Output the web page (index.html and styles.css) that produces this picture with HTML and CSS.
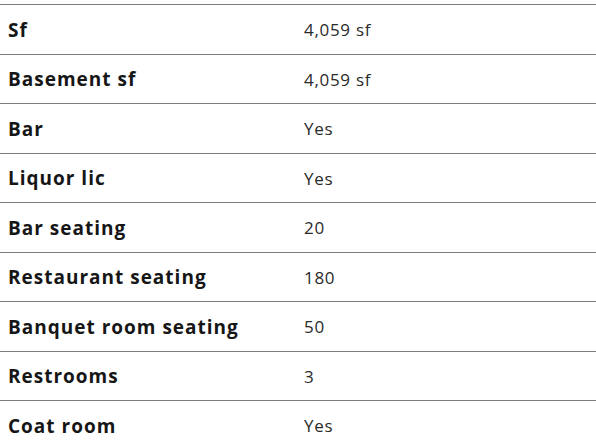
FILE: index.html
```html
<!DOCTYPE html>
<html>
<head>
<meta charset="utf-8">
<link rel="stylesheet" href="styles.css">
</head>
<body>
<div class="specs">
  <div class="row"><div class="label">Sf</div><div class="value">4,059 sf</div></div>
  <div class="row"><div class="label">Basement sf</div><div class="value">4,059 sf</div></div>
  <div class="row"><div class="label">Bar</div><div class="value">Yes</div></div>
  <div class="row"><div class="label">Liquor lic</div><div class="value">Yes</div></div>
  <div class="row"><div class="label">Bar seating</div><div class="value">20</div></div>
  <div class="row"><div class="label">Restaurant seating</div><div class="value">180</div></div>
  <div class="row"><div class="label">Banquet room seating</div><div class="value">50</div></div>
  <div class="row"><div class="label">Restrooms</div><div class="value">3</div></div>
  <div class="row"><div class="label">Coat room</div><div class="value">Yes</div></div>
</div>
</body>
</html>
```
FILE: styles.css
```css
html, body {
  margin: 0;
  padding: 0;
  background: #fff;
}
body {
  padding-top: 4px;
  font-family: "Open Sans", "Noto Sans", sans-serif;
}
.specs {
  display: flex;
  flex-direction: column;
}
.row {
  display: grid;
  grid-template-columns: 304px 1fr;
  align-items: center;
  height: 49.5px;
  box-sizing: border-box;
  border-top: 1px solid #7d7d7d;
}
.label {
  padding-left: 8px;
  padding-top: 1px;
  font-weight: 700;
  font-size: 19px;
  color: #161616;
  letter-spacing: 1px;
}
.value {
  padding-top: 1px;
  font-size: 17px;
  color: #2a2a2a;
  letter-spacing: 0.7px;
}
```
